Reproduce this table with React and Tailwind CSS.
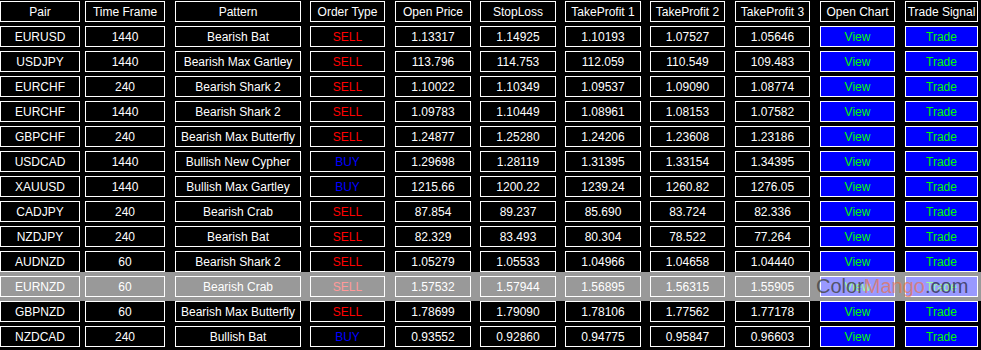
import React from "react";

const cols = [
  "w-[80px]",
  "w-[80px] ml-[5px]",
  "w-[126px] ml-[10px]",
  "w-[75px] ml-[9px]",
  "w-[76px] ml-[10px]",
  "w-[76px] ml-[9px]",
  "w-[76px] ml-[9px]",
  "w-[75px] ml-[9px]",
  "w-[75px] ml-[10px]",
  "w-[75px] ml-[10px]",
  "w-[73px] ml-[10px]",
];

const headers = [
  "Pair",
  "Time Frame",
  "Pattern",
  "Order Type",
  "Open Price",
  "StopLoss",
  "TakeProfit 1",
  "TakeProfit 2",
  "TakeProfit 3",
  "Open Chart",
  "Trade Signal",
];

const rows = [
  ["EURUSD", "1440", "Bearish Bat", "SELL", "1.13317", "1.14925", "1.10193", "1.07527", "1.05646"],
  ["USDJPY", "1440", "Bearish Max Gartley", "SELL", "113.796", "114.753", "112.059", "110.549", "109.483"],
  ["EURCHF", "240", "Bearish Shark 2", "SELL", "1.10022", "1.10349", "1.09537", "1.09090", "1.08774"],
  ["EURCHF", "1440", "Bearish Shark 2", "SELL", "1.09783", "1.10449", "1.08961", "1.08153", "1.07582"],
  ["GBPCHF", "240", "Bearish Max Butterfly", "SELL", "1.24877", "1.25280", "1.24206", "1.23608", "1.23186"],
  ["USDCAD", "1440", "Bullish New Cypher", "BUY", "1.29698", "1.28119", "1.31395", "1.33154", "1.34395"],
  ["XAUUSD", "1440", "Bullish Max Gartley", "BUY", "1215.66", "1200.22", "1239.24", "1260.82", "1276.05"],
  ["CADJPY", "240", "Bearish Crab", "SELL", "87.854", "89.237", "85.690", "83.724", "82.336"],
  ["NZDJPY", "240", "Bearish Bat", "SELL", "82.329", "83.493", "80.304", "78.522", "77.264"],
  ["AUDNZD", "60", "Bearish Shark 2", "SELL", "1.05279", "1.05533", "1.04966", "1.04658", "1.04440"],
  ["EURNZD", "60", "Bearish Crab", "SELL", "1.57532", "1.57944", "1.56895", "1.56315", "1.55905"],
  ["GBPNZD", "60", "Bearish Max Butterfly", "SELL", "1.78699", "1.79090", "1.78106", "1.77562", "1.77178"],
  ["NZDCAD", "240", "Bullish Bat", "BUY", "0.93552", "0.92860", "0.94775", "0.95847", "0.96603"],
];

function Cell({ i, children, tone = "plain" }) {
  const toneCls =
    tone === "btn"
      ? "bg-[#0000ff] text-[#00ff00]"
      : tone === "sell"
      ? "bg-black text-[#ff0000]"
      : tone === "buy"
      ? "bg-black text-[#0000ff]"
      : "bg-black text-white";
  return (
    <div
      className={`${cols[i]} h-[21px] shrink-0 border border-white flex items-center justify-center whitespace-nowrap overflow-hidden leading-[14px] ${toneCls}`}
    >
      {children}
    </div>
  );
}

export default function App() {
  return (
    <div
      className="w-[981px] h-[350px] bg-black overflow-hidden relative text-[12px]"
      style={{ fontFamily: '"Liberation Sans", Arial, sans-serif' }}
    >
      <div className="flex flex-col gap-[4px] pt-[1px]">
        <div className="flex">
          {headers.map((h, i) => (
            <Cell key={i} i={i}>
              {h}
            </Cell>
          ))}
        </div>
        {rows.map((r, ri) => (
          <div key={ri} className="flex relative">
            {r.map((v, i) => (
              <Cell key={i} i={i} tone={i === 3 ? (v === "SELL" ? "sell" : "buy") : "plain"}>
                {v}
              </Cell>
            ))}
            <Cell i={9} tone="btn">View</Cell>
            <Cell i={10} tone="btn">Trade</Cell>
            {ri === 10 && (
              <div className="absolute left-0 right-0 -top-[4px] -bottom-[4px] bg-white/60 pointer-events-none" />
            )}
          </div>
        ))}
      </div>
      <div
        className="absolute left-[816px] top-[273px] text-[20px] leading-[26px] whitespace-nowrap pointer-events-none"
        style={{ fontFamily: '"Liberation Sans", Arial, sans-serif' }}
      >
        <span className="text-[#404040]/80">Color</span>
        <span className="text-[#f0703c]/65">Mango</span>
        <span className="text-[#303050]/80">.com</span>
      </div>
    </div>
  );
}
